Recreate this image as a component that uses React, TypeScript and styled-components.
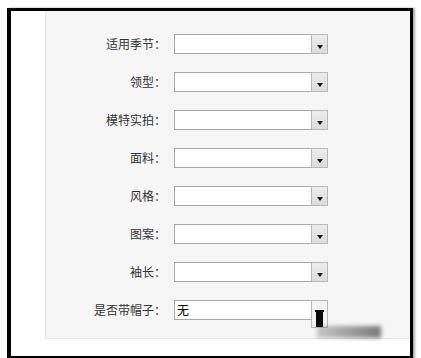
import styled, { createGlobalStyle } from 'styled-components'

const GlobalStyle = createGlobalStyle`
  html, body {
    margin: 0;
    padding: 0;
    background: #fff;
    overflow: hidden;
  }
`;

const Frame = styled.div`
  position: relative;
  margin: 8px 0 0 7px;
  width: 365px;
  height: 345px;
  border-style: solid;
  border-color: #000;
  border-width: 3px 3px 3px 4px;
  box-shadow: 2px 0 2px rgba(0, 0, 0, 0.35);
  background: #fff;
  padding-left: 34px;
  box-sizing: content-box;
  font-family: "Noto Sans CJK SC", "Noto Sans", sans-serif;
`;

const Panel = styled.div`
  width: 364px;
  height: 304px;
  padding: 23px 0 0 0;
  background: #f6f6f6;
  border-left: 1px solid #e4e4e4;
  border-bottom: 1px solid #e4e4e4;
  display: flex;
  flex-direction: column;
  gap: 18px;
`;

const Row = styled.div`
  display: flex;
  align-items: center;
  height: 20px;
`;

const Label = styled.label`
  width: 120px;
  text-align: right;
  font-size: 12px;
  line-height: 20px;
  color: #333;
  margin-right: 8px;
`;

const Select = styled.div`
  position: relative;
  width: 150px;
  height: 18px;
  border: 1px solid #a8a8a8;
  background: #fff;
  font-size: 12px;
  line-height: 18px;
  color: #000;
  padding-left: 2px;
  box-sizing: content-box;
`;

const Arrow = styled.div<{ $tall?: boolean }>`
  position: absolute;
  top: -1px;
  right: -1px;
  width: 17px;
  height: ${(p) => (p.$tall ? '28px' : '20px')};
  border: 1px solid #b8b8b8;
  background: ${(p) => (p.$tall ? '#f3f3f3' : 'linear-gradient(#ececec, #dcdcdc)')};
  display: flex;
  justify-content: center;
  padding-top: 10px;
  box-sizing: border-box;
`;

const Triangle = styled.div`
  width: 0;
  height: 0;
  border-left: 3.5px solid transparent;
  border-right: 3.5px solid transparent;
  border-top: 4px solid #111;
`;

const Cursor = styled.div`
  position: absolute;
  left: 305px;
  top: 299px;
  width: 7px;
  height: 17px;
  background: #0a0a0a;
  &::before {
    content: '';
    position: absolute;
    left: -1px;
    top: 0;
    width: 9px;
    height: 2px;
    background: #0a0a0a;
  }
`;

const CursorShadow = styled.div`
  position: absolute;
  left: 306px;
  top: 315px;
  width: 64px;
  height: 12px;
  background: linear-gradient(90deg, rgba(90, 90, 90, 0.3), rgba(90, 90, 90, 0.8));
  filter: blur(2px);
`;

const fields = ['适用季节', '领型', '模特实拍', '面料', '风格', '图案', '袖长', '是否带帽子'];

export default function App() {
  return (
    <>
      <GlobalStyle />
      <Frame>
        <Panel>
          {fields.map((f, i) => {
            const last = i === fields.length - 1;
            return (
              <Row key={f}>
                <Label>{f}：</Label>
                <Select>
                  {last ? '无' : ''}
                  <Arrow $tall={last}>{!last && <Triangle />}</Arrow>
                </Select>
              </Row>
            );
          })}
        </Panel>
        <CursorShadow />
        <Cursor />
      </Frame>
    </>
  )
}
